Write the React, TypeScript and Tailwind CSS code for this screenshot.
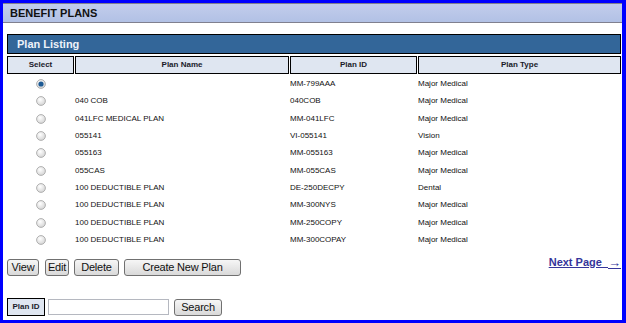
import React from "react";

// Benefit plans listing: header bar, plan table, action buttons, search.

type Plan = { name: string; id: string; type: string };

const plans: Plan[] = [
  { name: "", id: "MM-799AAA", type: "Major Medical" },
  { name: "040 COB", id: "040COB", type: "Major Medical" },
  { name: "041LFC MEDICAL PLAN", id: "MM-041LFC", type: "Major Medical" },
  { name: "055141", id: "VI-055141", type: "Vision" },
  { name: "055163", id: "MM-055163", type: "Major Medical" },
  { name: "055CAS", id: "MM-055CAS", type: "Major Medical" },
  { name: "100 DEDUCTIBLE PLAN", id: "DE-250DECPY", type: "Dental" },
  { name: "100 DEDUCTIBLE PLAN", id: "MM-300NYS", type: "Major Medical" },
  { name: "100 DEDUCTIBLE PLAN", id: "MM-250COPY", type: "Major Medical" },
  { name: "100 DEDUCTIBLE PLAN", id: "MM-300COPAY", type: "Major Medical" },
];

function Radio({ checked }: { checked?: boolean }) {
  return (
    <svg width="10" height="10" viewBox="0 0 10 10">
      <defs>
        <radialGradient id={checked ? "rc" : "ru"} cx="40%" cy="35%" r="70%">
          <stop offset="0%" stopColor="#ffffff" />
          <stop offset="100%" stopColor="#d2d2d2" />
        </radialGradient>
      </defs>
      <circle cx="5" cy="5" r="4.4" fill={`url(#${checked ? "rc" : "ru"})`} stroke="#a9a9a9" strokeWidth="0.9" />
      {checked && <circle cx="5" cy="5" r="2.6" fill="#1d5a94" />}
    </svg>
  );
}

function Btn({ label, w }: { label: string; w: string }) {
  return (
    <button
      type="button"
      className={`${w} flex h-[17px] items-center justify-center rounded-[3px] border border-[#707070] bg-gradient-to-b from-[#f6f6f6] to-[#d9d9d9] text-[11px] leading-none tracking-[-0.2px] text-[#111]`}
    >
      {label}
    </button>
  );
}

const cols = "grid grid-cols-[67px_214px_127px_203px] gap-x-px";

export default function App() {
  return (
    <div className="flex h-[323px] w-[626px] flex-col border-solid border-[#0000ff] border-t-[3px] border-l-[3px] border-r-[4px] border-b-[3px] bg-white font-['Liberation_Sans',Arial,sans-serif]">
      <div className="flex h-5 items-center border-t border-b border-[#80808f] bg-gradient-to-b from-[#c2cdec] to-[#b2c1e5] pl-[7px] text-[11px] font-bold text-[#111]">
        BENEFIT PLANS
      </div>

      <div className="ml-[4px] mt-[11px] flex h-5 w-[614px] items-center border border-black bg-[#336699] pl-[9px] text-[11px] font-bold text-[#eef2f9]">
        Plan Listing
      </div>

      <div className={`${cols} ml-[4px] mt-[2px] h-[18px] w-[614px]`}>
        {["Select", "Plan Name", "Plan ID", "Plan Type"].map((h) => (
          <div
            key={h}
            className="flex items-center justify-center border border-black bg-[#dfe6f1] text-[8px] font-bold text-[#1a1a2a]"
          >
            {h}
          </div>
        ))}
      </div>

      <div className="ml-[4px] mt-[1.5px] w-[614px]">
        {plans.map((p, i) => (
          <div key={i} className={`${cols} h-[17.33px] items-center text-[8px] text-[#111]`}>
            <div className="flex justify-center">
              <Radio checked={i === 0} />
            </div>
            <div>{p.name}</div>
            <div>{p.id}</div>
            <div>{p.type}</div>
          </div>
        ))}
      </div>

      <div className="ml-[4px] mt-[10.2px] flex w-[614px] items-start justify-between">
        <div className="flex">
          <Btn label="View" w="w-[32px]" />
          <div className="ml-[6px]">
            <Btn label="Edit" w="w-[24px]" />
          </div>
          <div className="ml-[5px]">
            <Btn label="Delete" w="w-[45px]" />
          </div>
          <div className="ml-[5px]">
            <Btn label="Create New Plan" w="w-[117px]" />
          </div>
        </div>
        <a className="-mt-[3px] flex items-center whitespace-pre text-[11px] font-bold leading-[13px] text-[#35359b] underline" href="#">
          {"Next Page  "}
          <span className="text-[13px] leading-[13px]">{"\u2192"}</span>
        </a>
      </div>

      <div className="ml-[4px] mt-[22px] flex items-start">
        <div className="flex h-[18px] w-[38px] items-center justify-center border border-black bg-[#dfe6f1] text-[8px] font-bold text-[#1a1a2a]">
          Plan ID
        </div>
        <input
          type="text"
          className="ml-[3px] mt-px h-[16px] w-[121px] border border-[#b5b8c0] bg-white outline-none"
        />
        <div className="ml-[5px] mt-px">
          <Btn label="Search" w="w-[48px]" />
        </div>
      </div>
    </div>
  );
}
